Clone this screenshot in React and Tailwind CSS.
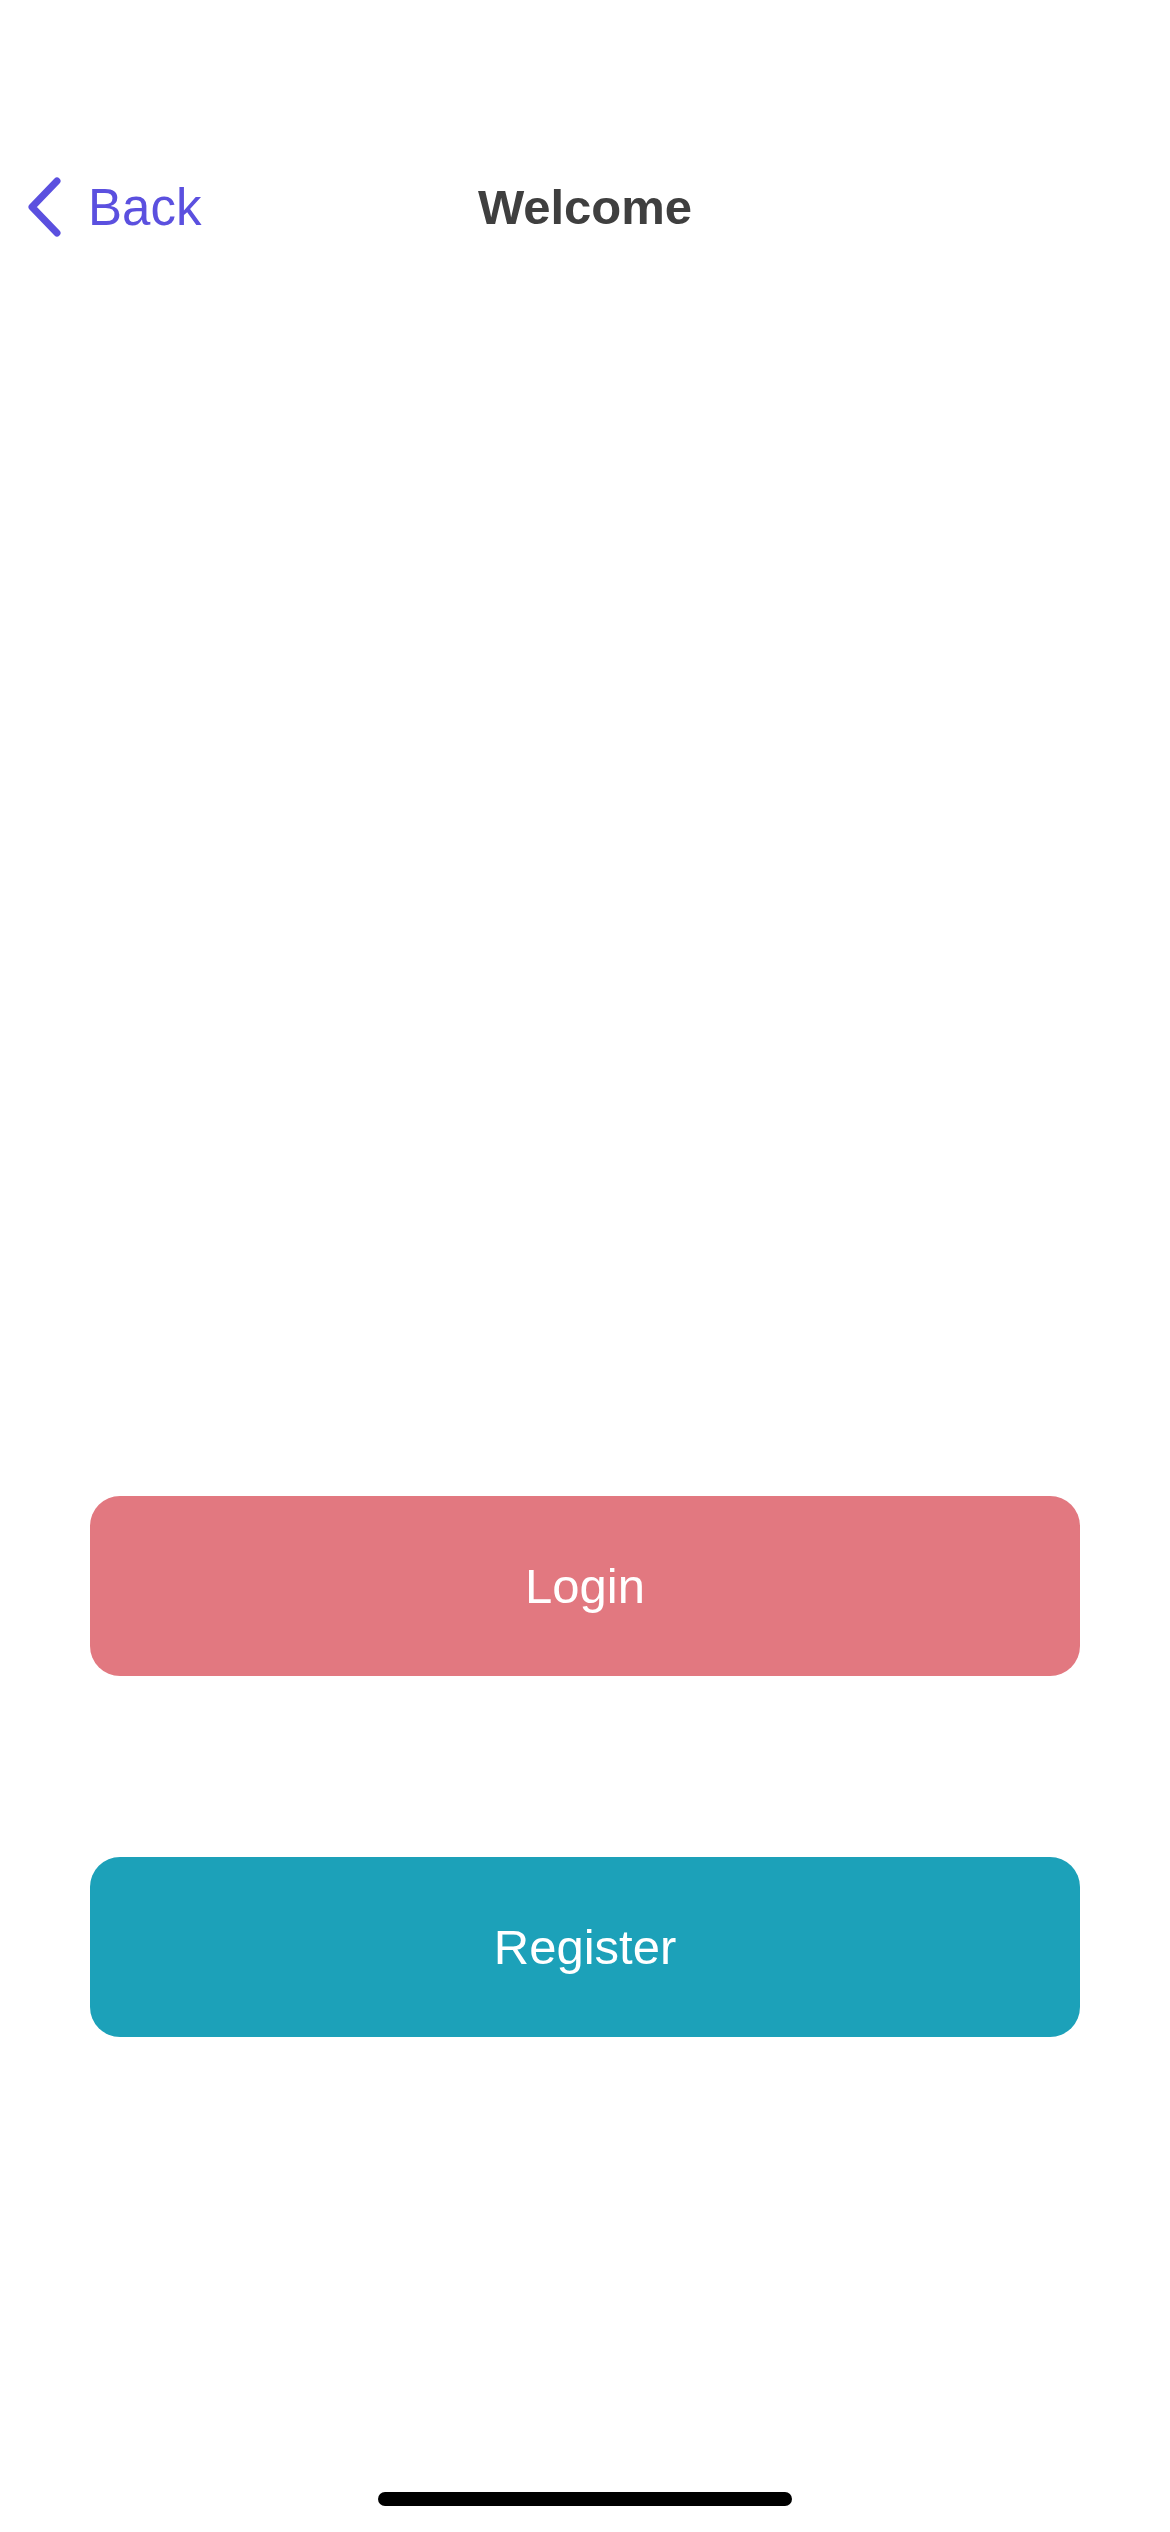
import React from "react";

function BackChevron() {
  return (
    <svg width="36" height="60" viewBox="0 0 36 60" fill="none">
      <path
        d="M31 4 L6 30 L31 56"
        stroke="#5B50DF"
        strokeWidth="7"
        strokeLinecap="round"
        strokeLinejoin="round"
      />
    </svg>
  );
}

export default function App() {
  const font = { fontFamily: '"Liberation Sans", Arial, sans-serif' };

  return (
    <div className="h-[2532px] w-[1170px] bg-white flex flex-col overflow-hidden" style={font}>
      {/* nav bar */}
      <div className="mt-[163px] h-[88px] grid grid-cols-[1fr_auto_1fr] items-center">
        <button className="flex items-center gap-[26px] pl-[26px] text-[#5B50DF] text-[51px] leading-none">
          <BackChevron />
          <span>Back</span>
        </button>
        <h1 className="text-[49px] font-bold text-[#3F3F3F] leading-none">Welcome</h1>
        <div />
      </div>

      {/* actions */}
      <div className="mt-[1245px] px-[90px] flex flex-col gap-[181px]">
        <button className="h-[180px] w-full rounded-[30px] bg-[#E27880] text-white text-[49px] leading-none">
          Login
        </button>
        <button className="h-[180px] w-full rounded-[30px] bg-[#1CA1B9] text-white text-[49px] leading-none">
          Register
        </button>
      </div>

      <div className="flex-1" />

      {/* home indicator */}
      <div className="mb-[26px] flex justify-center">
        <div className="h-[14px] w-[414px] rounded-full bg-black" />
      </div>
    </div>
  );
}
